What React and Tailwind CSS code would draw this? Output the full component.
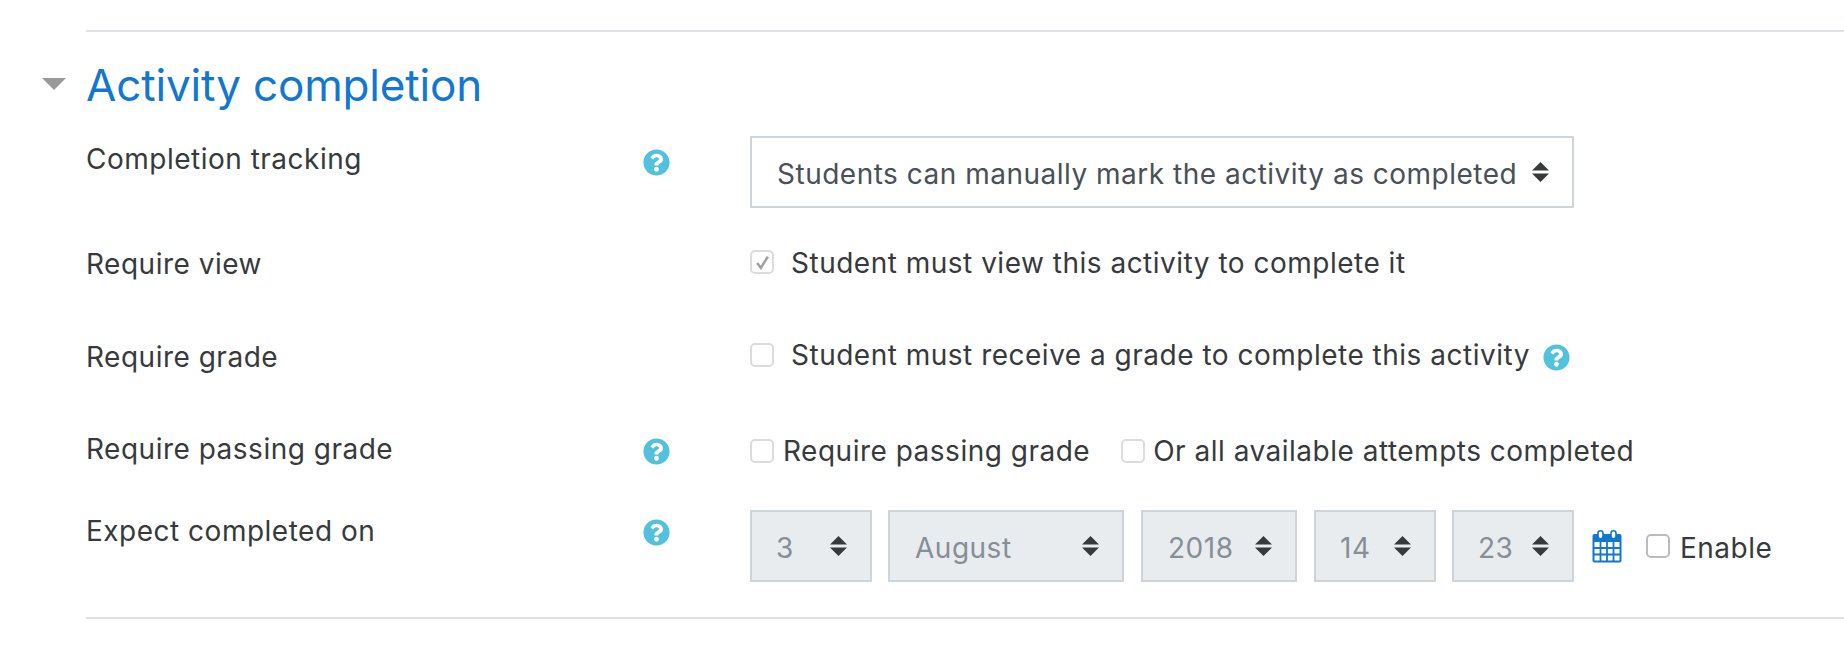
import React from "react";
import { FaQuestionCircle } from "react-icons/fa";

const HelpIcon = () => <FaQuestionCircle className="shrink-0 text-[27px] text-[#52c1de]" />;

const Arrows = () => (
  <svg width="17" height="20" viewBox="0 0 17 20" className="shrink-0">
    <path d="M8.5 0 L17 8.5 L0 8.5 Z M0 11.5 L17 11.5 L8.5 20 Z" fill="#373a3c" />
  </svg>
);

const CalendarIcon = () => (
  <svg width="30" height="33" viewBox="0 0 30 33" className="shrink-0">
    <rect x="0.5" y="4" width="29" height="28.5" rx="2" fill="#1177d1" />
    <rect x="2.5" y="12" width="25" height="18.5" fill="#fff" />
    <path d="M8.5 12v19M15 12v19M21.5 12v19M2 18h26M2 24.5h26" stroke="#1177d1" strokeWidth="1.8" />
    <rect x="6" y="0.8" width="5" height="8" rx="2.5" fill="#fff" stroke="#1177d1" strokeWidth="1.6" />
    <rect x="19" y="0.8" width="5" height="8" rx="2.5" fill="#fff" stroke="#1177d1" strokeWidth="1.6" />
  </svg>
);

const Checkbox = ({ checked, dark }) => (
  <span
    className={`flex h-6 w-6 shrink-0 items-center justify-center rounded-[5px] border-2 bg-white ${
      dark ? "border-[#bcbcbc]" : "border-[#dcdcdc]"
    }`}
  >
    {checked && (
      <svg width="15" height="15" viewBox="0 0 14 14">
        <path d="M2 7.5 L5.5 12 L12 1.5" fill="none" stroke="#a0a0a0" strokeWidth="2.4" />
      </svg>
    )}
  </span>
);

const DateSelect = ({ value, width, pad }) => (
  <div
    className={`flex h-[72px] items-center justify-between border-2 border-[#ced4da] bg-[#e9ecef] pr-[23px] text-[#868e96] ${width} ${pad}`}
  >
    <span className="pt-[3px]">{value}</span>
    <Arrows />
  </div>
);

const Row = ({ label, help, height, helpTop = "pt-[13px]", children }) => (
  <div className={`flex ${height}`}>
    <div className="w-[557px] shrink-0 leading-[46px]">{label}</div>
    <div className={`w-[107px] shrink-0 ${helpTop}`}>{help && <HelpIcon />}</div>
    <div className="min-w-0 flex-1">{children}</div>
  </div>
);

export default function App() {
  return (
    <div className="h-[650px] overflow-hidden bg-white pl-[86px] pt-[30px] font-['Inter',sans-serif] text-[28px] tracking-[0.5px] text-[#373a3c]">
      <div className="h-[2px] bg-[#dee2e6]" />

      <div className="relative flex h-[104px] items-center">
        <svg width="24" height="12" viewBox="0 0 24 12" className="absolute left-[-44px] top-[46px]">
          <path d="M0 0 H24 L12 12 Z" fill="#999" />
        </svg>
        <h3 className="pt-[2px] text-[44px] leading-none tracking-[-0.15px] text-[#1177d1]">Activity completion</h3>
      </div>

      <Row label="Completion tracking" help height="h-[105px]">
        <div className="flex h-[72px] w-[824px] items-center justify-between border-2 border-[#ced4da] pl-[25px] pr-[23px] text-[#495057]">
          <span className="pt-[3px]">Students can manually mark the activity as completed</span>
          <Arrows />
        </div>
      </Row>

      <Row label="Require view" height="h-[93px]">
        <div className="flex h-[42px] items-center gap-[17px]">
          <Checkbox checked />
          <span className="pt-[1px]">Student must view this activity to complete it</span>
        </div>
      </Row>

      <Row label="Require grade" height="h-[92px]">
        <div className="flex h-[42px] items-center">
          <Checkbox />
          <span className="ml-[17px]">Student must receive a grade to complete this activity</span>
          <span className="ml-[13px] mt-1 flex">
            <HelpIcon />
          </span>
        </div>
      </Row>

      <Row label="Require passing grade" help helpTop="pt-3" height="h-[82px]">
        <div className="flex h-[50px] items-center">
          <Checkbox />
          <span className="ml-[9px]">Require passing grade</span>
          <span className="ml-[31px]">
            <Checkbox />
          </span>
          <span className="ml-[8px]">Or all available attempts completed</span>
        </div>
      </Row>

      <Row label="Expect completed on" help helpTop="pt-[11px]" height="h-[109px]">
        <div className="flex items-center pt-[2px]">
          <DateSelect value="3" width="w-[122px]" pad="pl-[24px]" />
          <div className="ml-4">
            <DateSelect value="August" width="w-[236px]" pad="pl-[25px]" />
          </div>
          <div className="ml-[17px]">
            <DateSelect value="2018" width="w-[156px]" pad="pl-[25px]" />
          </div>
          <div className="ml-[17px]">
            <DateSelect value="14" width="w-[122px]" pad="pl-[24px]" />
          </div>
          <div className="ml-4">
            <DateSelect value="23" width="w-[122px]" pad="pl-[24px]" />
          </div>
          <div className="ml-[18px]">
            <CalendarIcon />
          </div>
          <div className="ml-6">
            <Checkbox dark />
          </div>
          <span className="ml-[10px] pt-[3px]">Enable</span>
        </div>
      </Row>

      <div className="h-[2px] bg-[#dee2e6]" />
    </div>
  );
}
